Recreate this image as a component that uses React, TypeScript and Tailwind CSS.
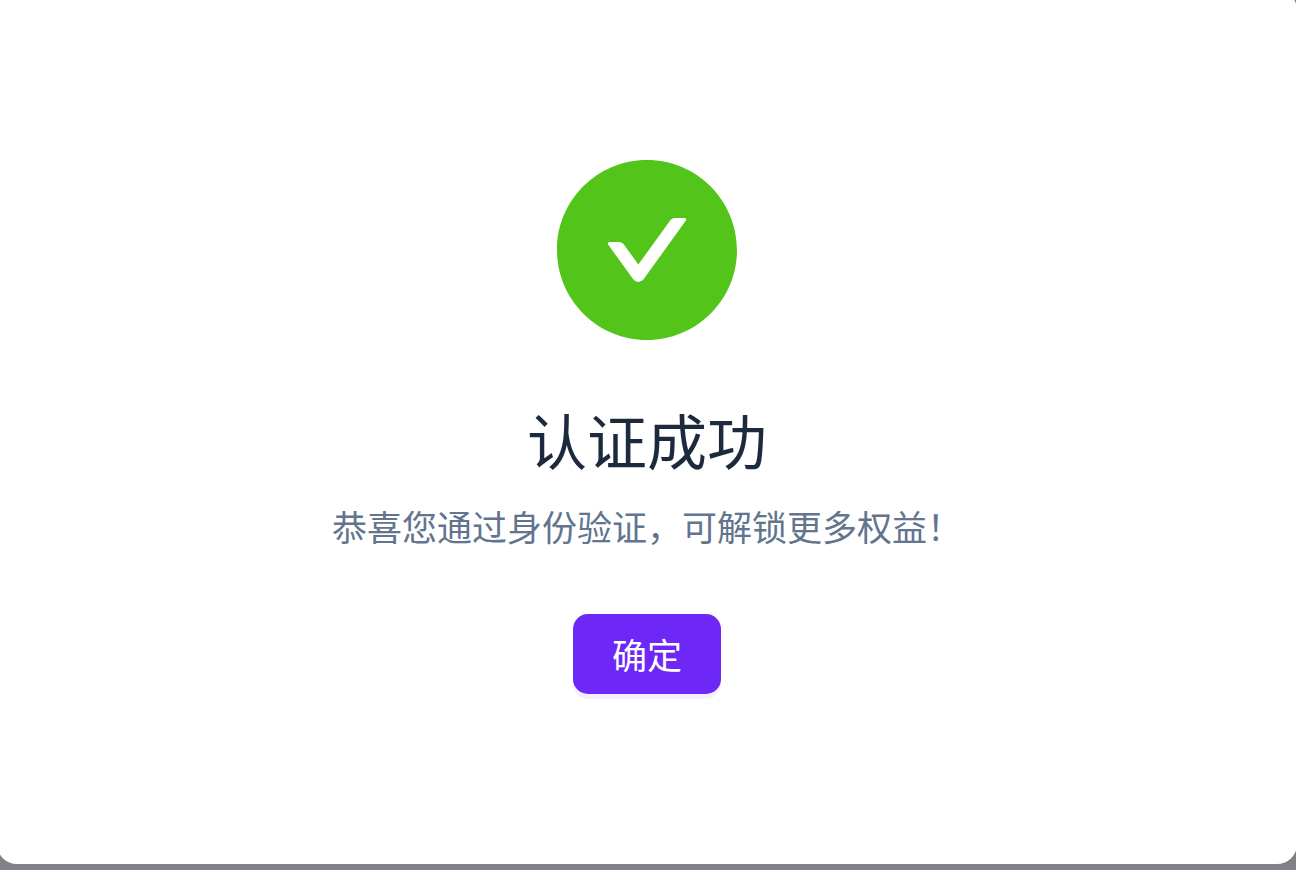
function CheckCircle() {
  return (
    <svg
      viewBox="64 64 896 896"
      className="w-[180px] h-[180px] text-[#52c41a]"
      fill="currentColor"
      aria-hidden="true"
    >
      <path d="M512 64C264.6 64 64 264.6 64 512s200.6 448 448 448 448-200.6 448-448S759.4 64 512 64zm193.5 301.7l-210.6 292a31.8 31.8 0 01-51.7 0L318.5 484.9c-3.8-5.3 0-12.7 6.5-12.7h46.9c10.2 0 19.9 4.9 25.9 13.3l71.2 98.8 157.2-218c6-8.3 15.6-13.3 25.9-13.3H699c6.5 0 10.3 7.4 6.5 12.7z" />
    </svg>
  );
}

export default function App() {
  return (
    <main className="min-h-screen overflow-hidden bg-[#818086] font-['Noto_Sans_CJK_SC',sans-serif]">
      {/* Dialog */}
      <section
        role="dialog"
        aria-labelledby="result-title"
        className="-mt-[10px] -ml-[3px] -mr-px flex flex-col items-center rounded-[20px] bg-white py-[170px] text-center"
      >
        <CheckCircle />

        <h1
          id="result-title"
          className="mt-[60px] text-[60px] leading-[78px] font-normal text-slate-800"
        >
          认证成功
        </h1>
        <p className="mt-5 text-[35px] leading-[56px] text-slate-500">
          恭喜您通过身份验证，可解锁更多权益！
        </p>

        <button
          type="button"
          className="mt-[60px] h-20 rounded-[15px] bg-[#6d28f7] px-[39px] text-[35px] leading-[56px] text-white shadow-[0_5px_0_#f5f0ff]"
        >
          确定
        </button>
      </section>
    </main>
  );
}
